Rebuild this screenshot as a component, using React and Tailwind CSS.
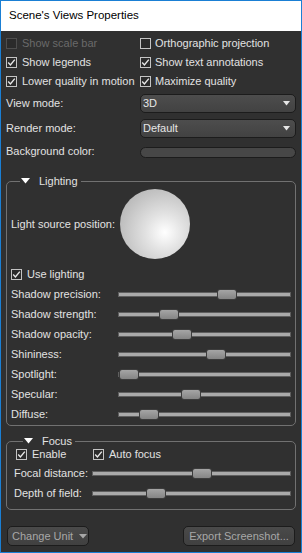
import React from "react";

const font = { fontFamily: '"Liberation Sans", Arial, sans-serif' };

function Check({ checked = true, disabled = false }) {
  return (
    <span
      className={
        "w-[11px] h-[11px] shrink-0 border flex items-center justify-center bg-[#2b2b2b] " +
        (disabled ? "border-[#4e4e4e]" : "border-[#c4c4c4]")
      }
    >
      {checked && (
        <svg width="9" height="9" viewBox="0 0 9 9">
          <path d="M1.2 4.6 L3.4 6.9 L7.8 1.6" fill="none" stroke="#e8e8e8" strokeWidth="1.4" />
        </svg>
      )}
    </span>
  );
}

function CheckRow({ label, checked = true, disabled = false, gap = "gap-[5px]" }) {
  return (
    <div className={"flex items-center h-[19px] whitespace-nowrap " + gap}>
      <Check checked={checked} disabled={disabled} />
      <span className={disabled ? "text-[#6a6a6a]" : "text-[#e2e2e2]"}>{label}</span>
    </div>
  );
}

function Combo({ value }) {
  return (
    <div className="flex-1 h-[19px] rounded-[5px] border border-[#1c1c1c] bg-gradient-to-b from-[#4d4d4d] to-[#424242] flex items-center justify-between pl-[2px] pr-[5px]">
      <span className="text-[#e6e6e6]">{value}</span>
      <svg width="7" height="5" viewBox="0 0 7 5">
        <path d="M0 0 H7 L3.5 4.5 Z" fill="#e6e6e6" />
      </svg>
    </div>
  );
}

function Slider({ pos }) {
  return (
    <div className="flex-1 relative h-[11px] flex items-center">
      <div className="w-full h-[5px] bg-[#a9a9a9] border border-[#5e5e5e]" />
      <div
        className="absolute top-0 h-[11px] w-[20px] rounded-[3px] border border-[#3c3c3c] bg-gradient-to-b from-[#a5a5a5] to-[#858585]"
        style={{ left: pos }}
      />
    </div>
  );
}

function SliderRow({ label, pos, labelW = "w-[107px]", h = "h-[20px]" }) {
  return (
    <div className={"flex items-center " + h}>
      <span className={"shrink-0 whitespace-nowrap text-[#e2e2e2] " + labelW}>{label}</span>
      <Slider pos={pos} />
    </div>
  );
}

function Legend({ title }) {
  return (
    <legend className="ml-[9px] h-[8px] leading-[8px] px-[1px] flex items-center gap-[9px] text-[#e2e2e2]">
      <svg width="9" height="6" viewBox="0 0 9 6">
        <path d="M0 0 H9 L4.5 5.5 Z" fill="#ffffff" />
      </svg>
      <span className="pr-[2px]">{title}</span>
    </legend>
  );
}

export default function App() {
  return (
    <div
      className="w-[302px] h-[553px] border border-[#1a7fd4] bg-[#303030] flex flex-col text-[11px] overflow-hidden"
      style={font}
    >
      <div className="h-[30px] bg-white flex items-center pl-[8px] text-[11.5px] text-black shrink-0 whitespace-nowrap">
        Scene's Views Properties
      </div>

      <div className="grid grid-cols-[134px_1fr] pl-[5px] pt-[3px]">
        <CheckRow label="Show scale bar" checked={false} disabled />
        <CheckRow label="Orthographic projection" checked={false} gap="gap-[4px]" />
        <CheckRow label="Show legends" />
        <CheckRow label="Show text annotations" gap="gap-[4px]" />
        <CheckRow label="Lower quality in motion" />
        <CheckRow label="Maximize quality" gap="gap-[4px]" />
      </div>

      <div className="flex flex-col pl-[5px] pr-[5px] mt-[3px] gap-[6px]">
        <div className="flex items-center">
          <span className="w-[134px] text-[#e2e2e2]">View mode:</span>
          <Combo value="3D" />
        </div>
        <div className="flex items-center">
          <span className="w-[134px] text-[#e2e2e2]">Render mode:</span>
          <Combo value="Default" />
        </div>
        <div className="flex items-start mt-[3px]">
          <span className="w-[134px] text-[#e2e2e2] leading-[11px] -mt-[1px]">Background color:</span>
          <div className="flex-1 h-[11px] rounded-full border border-[#1c1c1c] bg-[#474747]" />
        </div>
      </div>

      <fieldset className="mx-[5px] mt-[19px] border border-[#717171] rounded-[5px] pl-[4px] pr-[4px] pb-[1px]">
        <Legend title="Lighting" />
        <div className="flex items-center pt-[4px]">
          <span className="w-[109px] whitespace-nowrap text-[#e2e2e2]">Light source position:</span>
          <div
            className="w-[70px] h-[70px] rounded-full"
            style={{
              background:
                "radial-gradient(circle at 64% 62%, #ffffff 0%, #e2e2e2 30%, #c4c4c4 65%, #a9a9a9 100%)",
            }}
          />
        </div>
        <div className="flex items-center h-[20px] mt-[5px] gap-[5px]">
          <Check />
          <span className="text-[#e2e2e2]">Use lighting</span>
        </div>
        <SliderRow label="Shadow precision:" pos={99} />
        <SliderRow label="Shadow strength:" pos={41} />
        <SliderRow label="Shadow opacity:" pos={54} />
        <SliderRow label="Shininess:" pos={88} />
        <SliderRow label="Spotlight:" pos={1} />
        <SliderRow label="Specular:" pos={63} />
        <SliderRow label="Diffuse:" pos={21} />
      </fieldset>

      <fieldset className="mx-[5px] mt-[11px] border border-[#717171] rounded-[5px] pl-[7px] pr-[4px] pb-[6px]">
        <Legend title="Focus" />
        <div className="flex items-center h-[18px] pl-[2px]">
          <div className="w-[77px]">
            <CheckRow label="Enable" />
          </div>
          <CheckRow label="Auto focus" />
        </div>
        <SliderRow label="Focal distance:" pos={100} labelW="w-[78px]" />
        <SliderRow label="Depth of field:" pos={54} labelW="w-[78px]" />
      </fieldset>

      <div className="flex justify-between px-[6px] mt-[16px]">
        <div className="w-[82px] h-[20px] rounded-[5px] border border-[#1c1c1c] bg-gradient-to-b from-[#4a4a4a] to-[#404040] flex items-center pl-[4px] gap-[6px] text-[#a8a8a8] whitespace-nowrap">
          <span>Change Unit</span>
          <svg width="8" height="5" viewBox="0 0 8 5">
            <path d="M0 0 H8 L4 4.5 Z" fill="#a8a8a8" />
          </svg>
        </div>
        <div className="w-[112px] h-[20px] rounded-[5px] border border-[#1c1c1c] bg-gradient-to-b from-[#4a4a4a] to-[#404040] flex items-center justify-center text-[#a8a8a8] whitespace-nowrap">
          Export Screenshot...
        </div>
      </div>
    </div>
  );
}
